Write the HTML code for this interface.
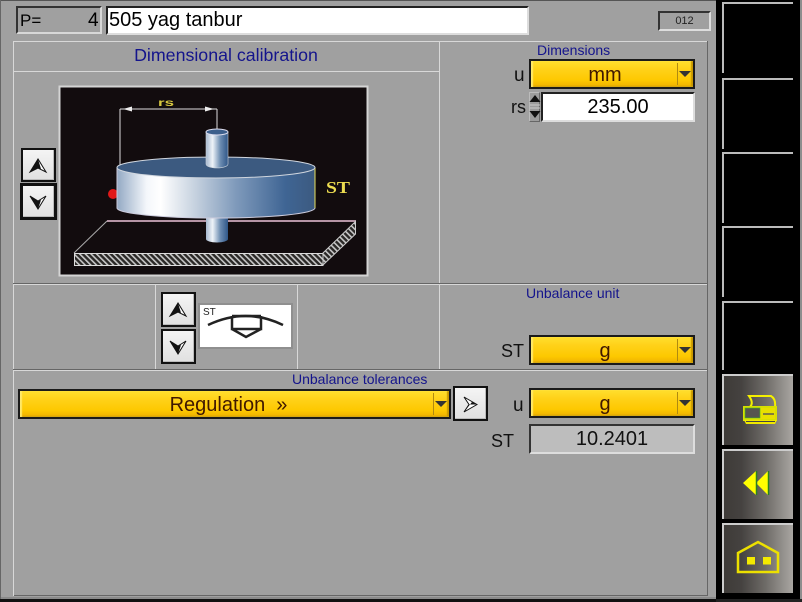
<!DOCTYPE html>
<html><head><meta charset="utf-8">
<style>
html,body{margin:0;padding:0;background:#a0a0a0}
#r{position:relative;width:802px;height:602px;overflow:hidden;background:#a0a0a0;font-family:"Liberation Sans",sans-serif;color:#111}
#r div{position:absolute;box-sizing:border-box}
.l{background:#d8d8d8}
.d{background:#666}
.t{white-space:nowrap;line-height:1}
.c{text-align:center}
.n{color:#14148c;font-size:14px}
.dd{background:linear-gradient(#ffdf2e 0,#ffd21a 30%,#fdc800 75%,#eeb000 100%);border:2px solid #1a1a1a;color:#401800;text-align:center;font-size:20px;box-shadow:inset 2px 0 1px #ffe96a,inset -2px -1px 1px #c89800}
.dd i{position:absolute;right:15px;top:2px;bottom:2px;width:1px;background:#b08a10}
.dd b{position:absolute;right:2px;top:10px;width:0;height:0;border-left:6px solid transparent;border-right:6px solid transparent;border-top:6px solid #333}
.btn{background:linear-gradient(#f4f4f4,#e0e0e0);border:2px solid #111;box-shadow:inset -1px -1px 0 #bbb}
.btn svg,.sb svg{position:absolute;left:0;top:0}
.sb{background:linear-gradient(90deg,#3e3b38 0,#454240 25%,#6e6b67 60%,#a9a6a2 100%);border-top:2px solid #ccc;border-left:2px solid #ccc}
.sk{background:#000;border-top:2px solid #bbb;border-left:2px solid #bbb}
</style></head><body>
<div id="r">
<div style="left:0;top:0;width:802px;height:1px;background:#555"></div>
<div style="left:0;top:0;width:1px;height:602px;background:#666"></div>
<div style="left:0;top:599px;width:716px;height:3px;background:#111"></div>
<div style="left:1px;top:597px;width:715px;height:2px;background:#8a8a8a"></div>

<div style="left:16px;top:6px;width:86px;height:28px;border:2px solid;border-color:#333 #d8d8d8 #d8d8d8 #333"></div>
<div class="t" style="left:20px;top:12px;font-size:17px;color:#000">P=</div>
<div class="t" style="left:88px;top:11px;font-size:19px;color:#000">4</div>
<div style="left:106px;top:6px;width:423px;height:29px;background:#fff;border:2px solid;border-color:#222 #ddd #ddd #222"></div>
<div class="t" style="left:109px;top:10px;font-size:20px;color:#000">505 yag tanbur</div>
<div style="left:658px;top:11px;width:53px;height:20px;border:2px solid;border-color:#333 #ddd #ddd #333"></div>
<div class="t c" style="left:658px;top:16px;width:53px;font-size:11px;color:#222">012</div>

<div class="l" style="left:13px;top:41px;width:694px;height:1px"></div>
<div class="l" style="left:13px;top:41px;width:1px;height:555px"></div>
<div class="d" style="left:14px;top:595px;width:694px;height:1px"></div>
<div class="d" style="left:707px;top:41px;width:1px;height:555px"></div>
<div class="l" style="left:13px;top:71px;width:426px;height:1px"></div>
<div class="l" style="left:439px;top:41px;width:1px;height:243px"></div>
<div class="l" style="left:13px;top:284px;width:694px;height:1px"></div>
<div class="d" style="left:13px;top:283px;width:694px;height:1px"></div>
<div class="l" style="left:155px;top:284px;width:1px;height:86px"></div>
<div class="l" style="left:297px;top:284px;width:1px;height:86px"></div>
<div class="l" style="left:439px;top:284px;width:1px;height:86px"></div>
<div class="l" style="left:13px;top:370px;width:694px;height:1px"></div>
<div class="d" style="left:13px;top:369px;width:694px;height:1px"></div>

<div class="t c" style="left:13px;top:47px;width:426px;font-size:17.800px;color:#14148c">Dimensional calibration</div>
<div class="t n" style="left:537px;top:43px">Dimensions</div>
<div class="t n" style="left:526px;top:286px">Unbalance unit</div>
<div class="t n" style="left:292px;top:372px">Unbalance tolerances</div>

<svg style="position:absolute;left:58px;top:85px" width="311" height="192" viewBox="58 85 311 192">
<defs>
<linearGradient id="g1" x1="0" x2="1" y1="0" y2="0">
<stop offset="0" stop-color="#93a9c4"/><stop offset=".15" stop-color="#f4f7fb"/><stop offset=".22" stop-color="#fff"/><stop offset=".4" stop-color="#c4d0de"/><stop offset=".6" stop-color="#7f9abb"/><stop offset=".85" stop-color="#3f6594"/><stop offset="1" stop-color="#3c5a80"/>
</linearGradient>
<linearGradient id="g2" x1="0" x2="1" y1="0" y2="0">
<stop offset="0" stop-color="#a5b8cf"/><stop offset=".3" stop-color="#eef3f8"/><stop offset=".65" stop-color="#6d8db2"/><stop offset="1" stop-color="#2f5688"/>
</linearGradient>
<pattern id="h" width="4" height="4" patternUnits="userSpaceOnUse" patternTransform="rotate(-45 0 0)">
<rect width="4" height="4" fill="#2a2826"/><rect width="1.600" height="4" fill="#c8c8c8"/>
</pattern>
</defs>
<rect x="59.500" y="86.500" width="308" height="189" fill="#120c0e" stroke="#d4d4d4" stroke-width="2"/>
<path d="M120 109V166M217 109V129M120 109H217" stroke="#ddd" fill="none"/>
<path d="M123 109l9-2.500v5zM214 109l-9-2.500v5z" fill="#eee"/>
<text x="158" y="106" font-size="10" font-weight="bold" fill="#d8c840" textLength="16" lengthAdjust="spacingAndGlyphs" font-family="Liberation Sans, sans-serif">rs</text>
<path d="M107 221H356V234L323 265H74V253Z" fill="#120c0e"/>
<path d="M107 221H356" stroke="#b595a5" stroke-width="2"/>
<path d="M107 221L74 253" stroke="#aaa"/>
<rect x="74.500" y="253.500" width="248.500" height="12" fill="url(#h)" stroke="#ddd"/>
<path d="M323 253L355.500 221.500V234L323 265Z" fill="url(#h)" stroke="#ccc"/>
<path d="M206 215H228V239A11 3.500 0 0 1 206 239Z" fill="url(#g2)"/>
<circle cx="113" cy="194" r="5" fill="#e01818"/>
<path d="M117 167.500V208A99 10 0 0 0 315 208V167.500Z" fill="url(#g1)" stroke="#ccd" stroke-width="1"/>
<path d="M315 168V208" stroke="#e6e060"/>
<ellipse cx="216" cy="167.500" rx="99" ry="10.500" fill="#3c5a80" stroke="#d0d6de"/>
<path d="M206 132V164A11 4 0 0 0 228 164V132Z" fill="url(#g2)" stroke="#cdd4dc" stroke-width=".6"/>
<ellipse cx="217" cy="132" rx="11" ry="3" fill="#3c5f8c" stroke="#dde"/>
<text x="326" y="193" font-size="17" font-weight="bold" fill="#ecdc50" font-family="Liberation Serif, serif" textLength="24" lengthAdjust="spacingAndGlyphs">ST</text>
</svg>

<div class="btn" style="left:21px;top:148px;width:35px;height:34px"><svg width="31" height="30"><path d="M15 9L7 22L15 18L23 22Z" fill="#fff" stroke="#111"/><path d="M15 9L7 22L15 18L18 19Z" fill="#111"/></svg></div>
<div class="btn" style="left:20px;top:183px;width:37px;height:37px;border-width:3px"><svg width="31" height="31"><path d="M15 23L7 10L15 15L23 10Z" fill="#fff" stroke="#111"/><path d="M15 23L7 10L15 15L18 14Z" fill="#111"/></svg></div>
<div class="btn" style="left:161px;top:292px;width:35px;height:35px"><svg width="31" height="31"><path d="M15 9L7 22L15 18L23 22Z" fill="#fff" stroke="#111"/><path d="M15 9L7 22L15 18L18 19Z" fill="#111"/></svg></div>
<div class="btn" style="left:161px;top:329px;width:35px;height:35px"><svg width="31" height="31"><path d="M15 23L7 10L15 15L23 10Z" fill="#fff" stroke="#111"/><path d="M15 23L7 10L15 15L18 14Z" fill="#111"/></svg></div>
<div class="btn" style="left:453px;top:386px;width:35px;height:35px"><svg width="31" height="31"><path d="M22 16.500L9 9L14 16.500L9 24Z" fill="#fff" stroke="#111"/><path d="M22 16.500L14 16.500L9 24L17 14Z" fill="#111"/></svg></div>

<div style="left:198px;top:303px;width:95px;height:46px;background:#fff;border:2px solid #8f8f8f"></div>
<div class="t" style="left:203px;top:308px;font-size:10px;color:#222">ST</div>
<svg style="position:absolute;left:198px;top:303px" width="95" height="46">
<path d="M10 22Q48 4 85 22" fill="none" stroke="#222" stroke-width="2.500"/>
<path d="M34 13H63" stroke="#222" stroke-width="2.500"/>
<path d="M34 13V26H63V13M34 26L48 34L63 26" fill="none" stroke="#222" stroke-width="2.500"/>
</svg>

<div class="t" style="left:514px;top:66px;font-size:19px">u</div>
<div class="dd" style="left:529px;top:59px;width:166px;height:30px;line-height:28px;padding-right:14px;font-size:20px">mm<i></i><b></b></div>
<div class="t" style="left:511px;top:98px;font-size:18px">rs</div>
<div style="left:529px;top:92px;width:11px;height:30px;background:#9c9c9c;border:1px solid #bbb;border-right-color:#666;border-bottom-color:#666"></div>
<svg style="position:absolute;left:529px;top:92px" width="12" height="30"><path d="M6 3L11.500 10H.5ZM.5 19H11.500L6 26Z" fill="#111"/><path d="M1 13H11M1 16H11" stroke="#ccc"/></svg>
<div style="left:541px;top:92px;width:154px;height:30px;background:#fff;border:2px solid;border-color:#222 #ddd #ddd #222"></div>
<div class="t c" style="left:541px;top:97px;width:154px;font-size:20px;color:#000">235.00</div>

<div class="t" style="left:501px;top:342px;font-size:18px">ST</div>
<div class="dd" style="left:529px;top:335px;width:166px;height:30px;line-height:28px;padding-right:14px">g<i></i><b></b></div>

<div class="dd" style="left:18px;top:389px;width:433px;height:30px;line-height:28px;padding-right:12px;font-size:20px">Regulation&nbsp; »<i></i><b></b></div>
<div class="t" style="left:513px;top:396px;font-size:19px">u</div>
<div class="dd" style="left:529px;top:388px;width:166px;height:30px;line-height:28px;padding-right:14px">g<i></i><b></b></div>
<div class="t" style="left:491px;top:432px;font-size:18px">ST</div>
<div style="left:529px;top:424px;width:166px;height:30px;background:#bdbdbd;border:2px solid;border-color:#333 #ddd #ddd #333"></div>
<div class="t c" style="left:529px;top:429px;width:146px;font-size:20px;color:#111;margin-left:10px">10.2401</div>

<div style="left:716px;top:0;width:84px;height:602px;background:#000"></div>
<div style="left:800px;top:0;width:2px;height:602px;background:#8d8d8d"></div>
<div style="left:716px;top:599px;width:86px;height:3px;background:#222"></div>
<div class="sk" style="left:722px;top:2px;width:71px;height:71px"></div>
<div class="sk" style="left:722px;top:78px;width:71px;height:71px"></div>
<div class="sk" style="left:722px;top:152px;width:71px;height:71px"></div>
<div class="sk" style="left:722px;top:226px;width:71px;height:71px"></div>
<div class="sk" style="left:722px;top:301px;width:71px;height:69px"></div>

<div class="sb" style="left:722px;top:374px;width:71px;height:71px"><svg width="69" height="69">
<path d="M25 20H47Q52 23 51 31H26Q30 27 25 20Z" fill="none" stroke="#f4f000" stroke-width="2"/>
<path d="M20 31H52V44H20Z" fill="#e8e000" stroke="#d8e000" stroke-width="2"/>
<rect x="21" y="32" width="15" height="10" fill="#56544f" stroke="#40c020" stroke-width=".6"/>
<path d="M39 38H50" stroke="#555" stroke-width="1.400"/>
<path d="M20 44H53L51 48H22Z" fill="#f0e800"/>
<path d="M22 45.500H51" stroke="#444"/>
</svg></div>
<div class="sb" style="left:722px;top:449px;width:71px;height:70px"><svg width="69" height="68">
<path d="M19 32L32 20V44ZM32 32L44 20V44Z" fill="#ffff00"/>
<path d="M32.500 20V44M44.500 20V44" stroke="#2a8020" stroke-width="1.500"/>
</svg></div>
<div class="sb" style="left:722px;top:523px;width:71px;height:70px"><svg width="69" height="68">
<path d="M14 28L34 17L54 28V47H14Z" fill="none" stroke="#ece000" stroke-width="2.500"/>
<rect x="23" y="32" width="8" height="7.500" fill="#f4ea00"/>
<rect x="39" y="32" width="8" height="7.500" fill="#f4ea00"/>
</svg></div>
</div>
</body></html>
